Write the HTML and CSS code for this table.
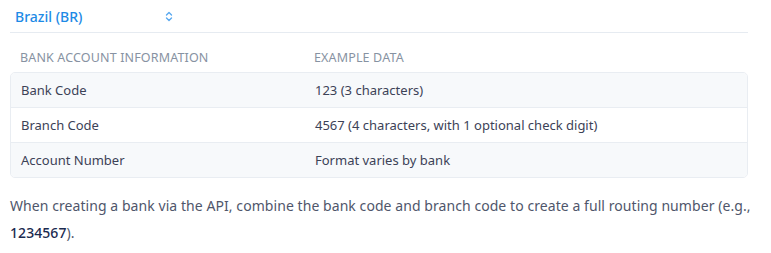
FILE: index.html
```html
<!DOCTYPE html>
<html>
<head>
<meta charset="utf-8">
<link rel="stylesheet" href="styles.css">
</head>
<body>
<div class="page">
  <div class="select">
    <span class="select-label">Brazil (BR)</span>
    <svg class="chev" width="8" height="11" viewBox="0 0 8 11"><path d="M1.5 4 L4 1.5 L6.5 4 M1.5 7 L4 9.5 L6.5 7" fill="none" stroke="#5aa9ef" stroke-width="1.4" stroke-linecap="round" stroke-linejoin="round"/></svg>
  </div>
  <div class="head">
    <div class="col1">BANK ACCOUNT INFORMATION</div>
    <div class="col2">EXAMPLE DATA</div>
  </div>
  <div class="table">
    <div class="row alt"><div class="col1">Bank Code</div><div class="col2">123 (3 characters)</div></div>
    <div class="row"><div class="col1">Branch Code</div><div class="col2">4567 (4 characters, with 1 optional check digit)</div></div>
    <div class="row alt"><div class="col1">Account Number</div><div class="col2">Format varies by bank</div></div>
  </div>
  <p class="note">When creating a bank via the API, combine the bank code and branch code to create a full routing number (e.g., <span class="code">1234567</span>).</p>
</div>
</body>
</html>
```
FILE: styles.css
```css
html, body { margin: 0; padding: 0; background: #fff; }
body { font-family: "Noto Sans", "Open Sans", sans-serif; color: #4f566b; }
.page { width: 738px; padding-left: 10px; }
.select { height: 32px; border-bottom: 1px solid #e6ebf1; display: flex; align-items: center; padding-left: 5px; }
.select-label { color: #1d8ae6; font-size: 14px; font-weight: 500; width: 150px; }
.chev { display: block; margin-top: 1px; }
.head { display: flex; height: 29px; padding-top: 10px; align-items: center; font-size: 12.5px; color: #8792a2; letter-spacing: 0.15px; }
.col1 { width: 294px; padding-left: 10px; }
.col2 { flex: 1; }
.table { border: 1px solid #e9edf2; border-radius: 5px; overflow: hidden; }
.row { display: flex; align-items: center; height: 34px; font-size: 13px; color: #3c4257; }
.row + .row { border-top: 1px solid #e9edf2; }
.row.alt { background: #f7f9fb; }
.row .col1, .row .col2 { letter-spacing: 0; }
.note { margin: 14px -14px 0 0; font-size: 14px; line-height: 27px; color: #4f566b; letter-spacing: 0.065px; }
.code { color: #1a2a4f; font-weight: 500; }
```
